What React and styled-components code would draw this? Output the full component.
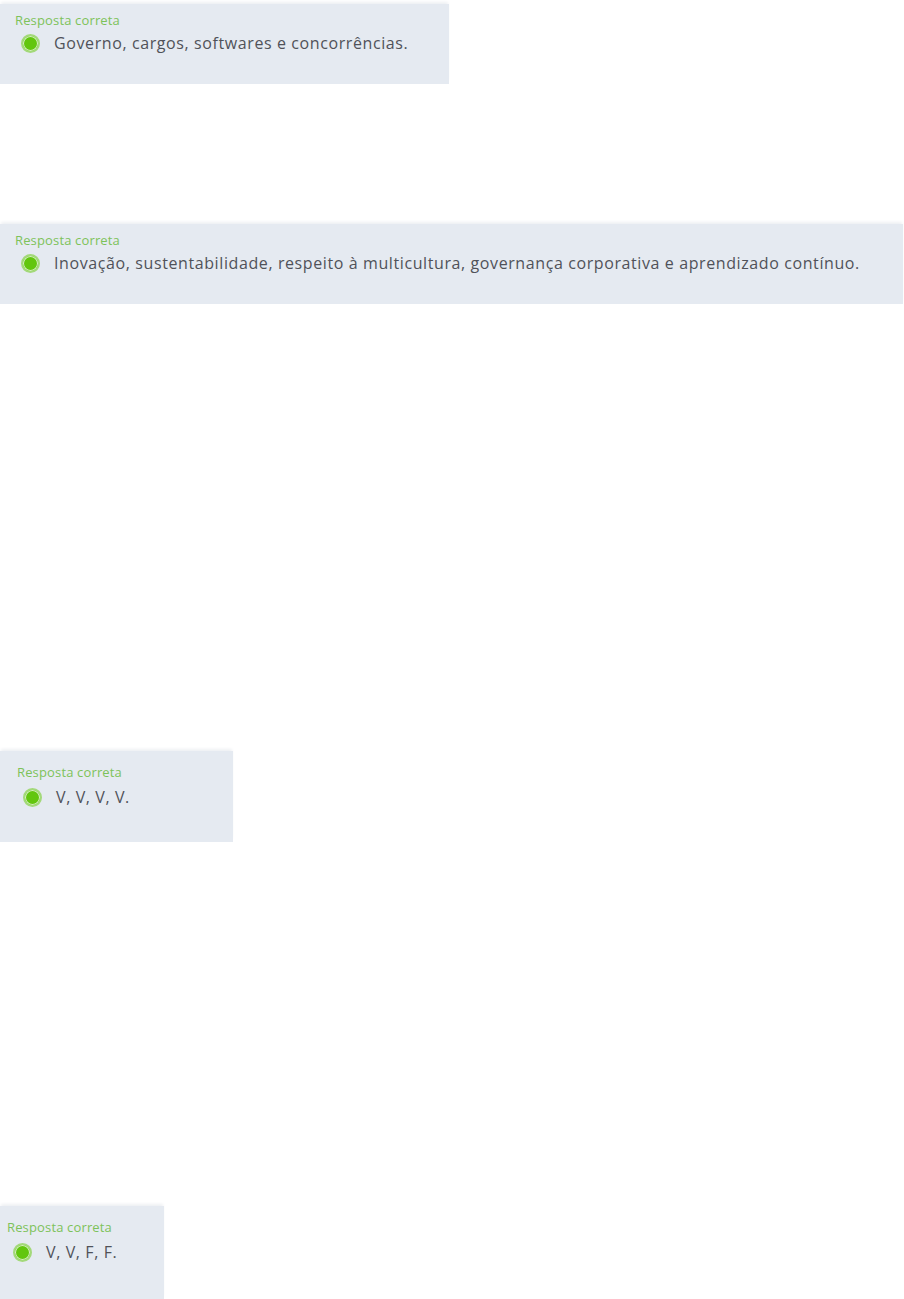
import React from 'react';
import styled, { createGlobalStyle } from 'styled-components';

const GlobalStyle = createGlobalStyle`
  html, body {
    margin: 0;
    padding: 0;
    background: #ffffff;
  }
  body {
    font-family: "Open Sans", "Liberation Sans", sans-serif;
  }
`;

const answers = [
  {
    text: 'Governo, cargos, softwares e concorrências.',
    width: 449,
    height: 80,
    top: 4,
    inset: 0,
  },
  {
    text: 'Inovação, sustentabilidade, respeito à multicultura, governança corporativa e aprendizado contínuo.',
    width: 903,
    height: 80,
    top: 140,
    inset: 0,
  },
  {
    text: 'V, V, V, V.',
    width: 233,
    height: 91,
    top: 447,
    inset: 2,
    tall: true,
  },
  {
    text: 'V, V, F, F.',
    width: 164,
    height: 94,
    top: 364,
    inset: -8,
    tall: true,
  },
];

function AnswerCard({ text, width, height, top, inset, tall }) {
  return (
    <Card $width={width} $height={height} $top={top} $inset={inset} $tall={tall}>
      <Label>Resposta correta</Label>
      <Option $tall={tall}>
        <Radio />
        <OptionText>{text}</OptionText>
      </Option>
    </Card>
  );
}

export default function App() {
  return (
    <>
      <GlobalStyle />
      <Page>
        {answers.map((a) => (
          <AnswerCard key={a.text} {...a} />
        ))}
      </Page>
    </>
  );
}

const Page = styled.div`
  display: flex;
  flex-direction: column;
  align-items: flex-start;
`;

const Card = styled.div`
  box-sizing: border-box;
  width: ${(p) => p.$width}px;
  height: ${(p) => p.$height}px;
  margin-top: ${(p) => p.$top}px;
  padding: ${(p) => (p.$tall ? 13 : 8)}px 0 0 ${(p) => 15 + p.$inset}px;
  background: #e5eaf1;
  box-shadow: 0 -3px 3px -1px #eef0f3;
  display: flex;
  flex-direction: column;
`;

const Label = styled.div`
  font-size: 13px;
  line-height: 16px;
  letter-spacing: 0.15px;
  color: #7dc25a;
`;

const Option = styled.div`
  display: flex;
  align-items: center;
  gap: 14px;
  margin-top: ${(p) => (p.$tall ? 6 : 4)}px;
  padding-left: 6px;
`;

const Radio = styled.span`
  flex: none;
  box-sizing: border-box;
  width: 19px;
  height: 19px;
  border-radius: 50%;
  background: #62c60e;
  border: 2px solid #a3d97a;
  box-shadow: inset 0 0 0 1px #d9efc6;
`;

const OptionText = styled.span`
  font-size: 16px;
  line-height: 22px;
  letter-spacing: 0.6px;
  color: #505259;
  white-space: nowrap;
`;
